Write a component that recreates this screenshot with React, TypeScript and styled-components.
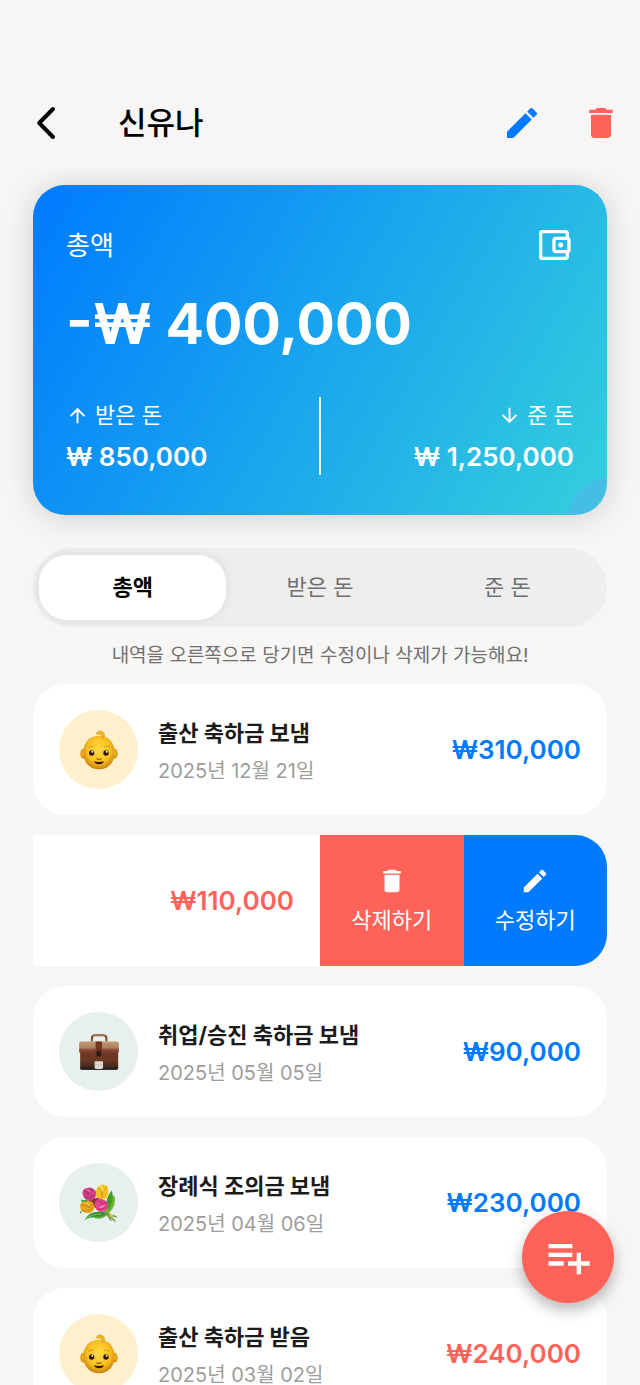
import React, { useState } from "react";
import styled, { createGlobalStyle } from "styled-components";
import {
  MdArrowDownward,
  MdArrowUpward,
  MdDelete,
  MdEdit,
  MdOutlineAccountBalanceWallet,
  MdPlaylistAdd,
} from "react-icons/md";

const color = {
  page: "#f7f6f4",
  blue: "#007aff",
  red: "#ff6259",
  ink: "#1c1b1b",
  muted: "#707070",
  faint: "#9d9d9d",
  cream: "#fff0cd",
  mint: "#e7f0ef",
};

const GlobalStyle = createGlobalStyle`
  *, *::before, *::after { box-sizing: border-box; }
  body {
    margin: 0;
    background: ${color.page};
    color: ${color.ink};
    font-family: Inter, "Noto Sans CJK KR", sans-serif;
  }
  h1, h2, p, ul { margin: 0; padding: 0; }
  ul { list-style: none; }
  button {
    margin: 0;
    padding: 0;
    border: 0;
    background: none;
    color: inherit;
    font: inherit;
    cursor: pointer;
  }
  svg { display: block; }
`;

const Screen = styled.div`
  display: flex;
  flex-direction: column;
  height: 100vh;
`;

const Header = styled.header`
  display: flex;
  align-items: center;
  flex: none;
  padding: 100px 19px 23px 26px;
`;

const BackButton = styled.button`
  display: grid;
  place-items: center;
  width: 40px;
  height: 46px;
`;

const Name = styled.h1`
  flex: 1;
  margin-left: 52px;
  color: #000;
  font-size: 31px;
  font-weight: 500;
  line-height: 46px;
`;

const HeaderActions = styled.div`
  display: flex;
  gap: 39px;
`;

const IconButton = styled.button<{ $tint: string }>`
  display: grid;
  place-items: center;
  height: 46px;
  color: ${(p) => p.$tint};
`;

const Content = styled.main`
  flex: 1;
  min-height: 0;
  padding: 16px 33px 0;
  overflow-y: auto;
  scrollbar-width: none;
`;

const Summary = styled.section`
  position: relative;
  display: flex;
  flex-direction: column;
  padding: 40px 33px;
  border-radius: 32px;
  background:
    radial-gradient(circle at calc(100% + 4px) calc(100% + 5px), #43bfe6 43px, transparent 44px),
    linear-gradient(120deg, #007aff 0%, #34d0dc 100%);
  box-shadow: 0 2px 30px rgba(0, 0, 0, 0.16);
  color: #fff;
`;

const SummaryTop = styled.div`
  display: flex;
  align-items: center;
  justify-content: space-between;
  height: 40px;
`;

const SummaryLabel = styled.h2`
  padding-top: 2px;
  font-size: 26px;
  font-weight: 400;
  line-height: 40px;
`;

const Total = styled.p`
  margin-top: 24px;
  font-size: 57px;
  font-weight: 700;
  line-height: 70px;
`;

const Stats = styled.div`
  display: flex;
  justify-content: space-between;
  margin-top: 38px;
`;

const Divider = styled.div`
  width: 2px;
  background: rgba(255, 255, 255, 0.9);
`;

const Stat = styled.div<{ $end?: boolean }>`
  display: flex;
  flex: 1;
  flex-direction: column;
  align-items: ${(p) => (p.$end ? "flex-end" : "flex-start")};
  gap: 8px;
  padding: 1px 0;
`;

const StatLabel = styled.p`
  display: flex;
  align-items: center;
  gap: 6px;
  font-size: 22px;
  line-height: 34px;
`;

const StatValue = styled.p`
  font-size: 26px;
  font-weight: 600;
  line-height: 34px;
`;

const Tabs = styled.div`
  display: flex;
  margin-top: 33px;
  padding: 7px 6px;
  border-radius: 39px;
  background: #eeeeee;
`;

const Tab = styled.button<{ $active: boolean }>`
  flex: 1;
  height: 65px;
  padding-bottom: 5px;
  border-radius: 28px;
  background: ${(p) => (p.$active ? "#fff" : "transparent")};
  box-shadow: ${(p) => (p.$active ? "0 0 12px rgba(0, 0, 0, 0.08)" : "none")};
  color: ${(p) => (p.$active ? "#000" : color.muted)};
  font-size: 22px;
  font-weight: ${(p) => (p.$active ? 700 : 400)};
`;

const Hint = styled.p`
  padding: 15px 0 14px;
  color: ${color.muted};
  font-size: 19px;
  line-height: 28px;
  text-align: center;
`;

const List = styled.ul`
  display: flex;
  flex-direction: column;
  gap: 20px;
  padding-bottom: 20px;
`;

const Row = styled.li`
  display: flex;
  align-items: center;
  min-height: 131px;
  padding: 26px;
  border-radius: 32px;
  background: #fff;
`;

const Avatar = styled.span<{ $fill: string }>`
  display: grid;
  place-items: center;
  width: 79px;
  height: 79px;
  border-radius: 50%;
  background: ${(p) => p.$fill};
`;

const RowText = styled.div`
  display: flex;
  flex: 1;
  flex-direction: column;
  gap: 2px;
  margin-left: 20px;
  padding-top: 4px;
`;

const RowTitle = styled.p`
  font-size: 22px;
  font-weight: 700;
  line-height: 36px;
`;

const RowDate = styled.p`
  color: ${color.faint};
  font-size: 20px;
  line-height: 36px;
`;

const Amount = styled.span<{ $tint: string }>`
  color: ${(p) => p.$tint};
  font-size: 26px;
  font-weight: 600;
  line-height: 34px;
`;

const SwipedRow = styled.li`
  display: grid;
  grid-template-columns: 2fr 1fr 1fr;
  min-height: 131px;
  border-radius: 0 32px 32px 0;
  overflow: hidden;
`;

const SwipedFace = styled.div`
  display: flex;
  align-items: center;
  justify-content: flex-end;
  padding-right: 26px;
  background: #fff;
`;

const SwipeAction = styled.button<{ $fill: string }>`
  display: flex;
  flex-direction: column;
  align-items: center;
  justify-content: center;
  gap: 8px;
  background: ${(p) => p.$fill};
  color: #fff;
  font-size: 22px;
  line-height: 32px;
`;

const AddButton = styled.button`
  position: fixed;
  right: 26px;
  bottom: 82px;
  display: grid;
  place-items: center;
  width: 92px;
  height: 92px;
  border-radius: 50%;
  background: ${color.red};
  box-shadow: 0 8px 14px rgba(0, 0, 0, 0.22), 0 2px 20px rgba(0, 0, 0, 0.08);
  color: #fff;
`;

const BackIcon = () => (
  <svg width="20" height="34" viewBox="0 0 20 34" fill="none" aria-hidden="true">
    <path d="M17 3 3.2 17 17 31" stroke="#000" strokeWidth="4" strokeLinecap="round" strokeLinejoin="round" />
  </svg>
);

const BabyIcon = () => (
  <svg width="38" height="40" viewBox="0 0 114 120" aria-hidden="true">
    <defs>
      <radialGradient id="skin" cx="50%" cy="42%" r="58%">
        <stop offset="0" stopColor="#ffda45" />
        <stop offset="0.65" stopColor="#f9c020" />
        <stop offset="1" stopColor="#c87f0d" />
      </radialGradient>
    </defs>
    <ellipse cx="10" cy="71" rx="9" ry="15" fill="#dc9a16" />
    <ellipse cx="104" cy="71" rx="9" ry="15" fill="#dc9a16" />
    <ellipse cx="11" cy="69" rx="5" ry="9" fill="#f3b51d" />
    <ellipse cx="103" cy="69" rx="5" ry="9" fill="#f3b51d" />
    <path d="M57 17C84 17 104 37 104 66c0 31-19 52-47 52S10 97 10 66C10 37 30 17 57 17Z" fill="url(#skin)" />
    <path d="M50 8C58-3 76 4 74 20c-1 5-4 6-7 5 1-9-5-14-15-12-3 0-4-3-2-5Z" fill="#efb51b" stroke="#bf7c0f" strokeWidth="1" />
    <path d="M25 52q7-6 15-3M74 49q8-3 15 3" fill="none" stroke="#d79a1c" strokeWidth="3" strokeLinecap="round" />
    <circle cx="35" cy="69" r="8" fill="#2e1507" />
    <circle cx="78" cy="69" r="8" fill="#2e1507" />
    <circle cx="37" cy="65" r="3" fill="#fff" />
    <circle cx="80" cy="65" r="3" fill="#fff" />
    <path d="M51 86q6 5 12 0" fill="none" stroke="#a85d08" strokeWidth="4" strokeLinecap="round" />
    <path d="M42 94q15 4 30 0-3 9-15 9t-15-9Z" fill="#34150a" />
  </svg>
);

const BriefcaseIcon = () => (
  <svg width="40" height="36" viewBox="0 0 118 107" aria-hidden="true">
    <defs>
      <linearGradient id="leather" x1="0" y1="0" x2="0" y2="1">
        <stop offset="0" stopColor="#6f3524" />
        <stop offset="0.6" stopColor="#6b3823" />
        <stop offset="1" stopColor="#38241c" />
      </linearGradient>
      <linearGradient id="flap" x1="0" y1="0" x2="0" y2="1">
        <stop offset="0" stopColor="#c09a74" />
        <stop offset="0.5" stopColor="#ad815c" />
        <stop offset="0.65" stopColor="#8a4a3a" />
        <stop offset="1" stopColor="#6d3427" />
      </linearGradient>
    </defs>
    <path d="M38 22V13q0-9 9-9h25q9 0 9 9v9" fill="none" stroke="#7b4a35" strokeWidth="6" />
    <path d="M41 7q3-4 8-4h22q5 0 7 4" fill="none" stroke="#a87a5a" strokeWidth="4" />
    <path d="M3 30h113v70q0 6-6 6H8q-5 0-5-6Z" fill="url(#leather)" />
    <path d="M5 22h108q5 0 5 6v26q-8 6-20 6H19Q7 60 0 54V28q0-6 5-6Z" fill="url(#flap)" />
    <path d="M3 98h113v2q0 6-6 6H8q-5 0-5-6Z" fill="#2b211d" />
    <path d="M49 22h19v45q0 5-5 5h-9q-5 0-5-5Z" fill="#70351f" />
    <path d="M52 50h13v13q0 4-4 4h-5q-4 0-4-4Z" fill="#2c1c17" />
    <path d="M46 81h25v18q0 5-5 5H51q-5 0-5-5Z" fill="#dedbd7" />
    <path d="M48 91h21v2H48Z" fill="#b8b3ae" />
  </svg>
);

const BouquetIcon = () => (
  <svg width="38" height="38" viewBox="0 0 116 116" aria-hidden="true">
    <path d="M105 35q8 30-17 54L76 78q6-31 29-43Z" fill="#69b52c" />
    <path d="M97 20q10 28-9 56l-9-6q0-30 18-50Z" fill="#3f9c2c" />
    <path d="M14 109q16-28 52-24 9 1 18 4-14 16-34 13-16-2-36 7Z" fill="#2f8f3a" />
    <path d="M16 108q21-17 50-16" fill="none" stroke="#8ccb4b" strokeWidth="3" />
    <path d="M45 101q20 6 40-12" fill="none" stroke="#55a930" strokeWidth="6" />
    <path d="m75 82 18 13 17 5M82 87l24 26M80 88l14 22" fill="none" stroke="#7a9f3c" strokeWidth="5" strokeLinecap="round" />
    <path d="m91 93 8 6" stroke="#f0cb31" strokeWidth="6" />
    <path d="M26 48q20-10 36 2l-10 24-26-8Z" fill="#8a3a3a" />
    <path d="M9 20q4-8 13-8 10-4 18 3 11 4 9 16-1 16-17 20-18-1-22-14-5-9-1-17Z" fill="#cf3f86" />
    <path d="M12 21q11 0 14 12 2-15 14-17M16 40q12 5 26-5" fill="none" stroke="#a02a66" strokeWidth="3" />
    <path d="M22 17q7 3 9 9" stroke="#e773a4" strokeWidth="4" fill="none" />
    <path d="M53 9q7 0 10-6 7-4 12 1 6-1 10 7 6 23-7 34-12 8-24 0-11-12-1-36Z" fill="#f5c022" />
    <path d="M55 12q13 8 13 30Q67 20 81 11" fill="none" stroke="#d6941a" strokeWidth="3" />
    <path d="M64 8q6 6 6 14" fill="none" stroke="#ffe067" strokeWidth="5" />
    <path d="M3 58q12-12 27-5 15 4 14 20-2 14-18 16Q4 88 2 77q-3-11 1-19Z" fill="#e6a81e" />
    <path d="M3 65q16-4 25 8 3-11 14-10M7 81q16 6 29-5" fill="none" stroke="#bd7d16" strokeWidth="3" />
    <path d="M12 59q12-2 17 6" fill="none" stroke="#f6c83d" strokeWidth="4" />
    <path d="M52 47q10-7 20 2 12 2 13 15 0 17-15 21-15 3-22-10-7-16 4-28Z" fill="#e2468f" />
    <path d="M54 51q13 0 13 13 4-10 15-5M52 75q14 7 28-6" fill="none" stroke="#b92d70" strokeWidth="3" />
    <path d="M60 70q9 2 15-5" fill="none" stroke="#f589b5" strokeWidth="5" />
    <path d="M46 48q6-5 10-2" stroke="#a02a60" strokeWidth="5" fill="none" />
    <path d="M4 50q10 4 19-1M3 84l-2 5" fill="none" stroke="#3e9a35" strokeWidth="5" />
  </svg>
);

type Entry = {
  title: string;
  date: string;
  amount: string;
  received?: boolean;
  icon: React.ReactNode;
  fill: string;
  swiped?: boolean;
};

const entries: Entry[] = [
  { title: "출산 축하금 보냄", date: "2025년 12월 21일", amount: "₩310,000", icon: <BabyIcon />, fill: color.cream },
  { title: "", date: "", amount: "₩110,000", received: true, icon: null, fill: color.cream, swiped: true },
  { title: "취업/승진 축하금 보냄", date: "2025년 05월 05일", amount: "₩90,000", icon: <BriefcaseIcon />, fill: color.mint },
  { title: "장례식 조의금 보냄", date: "2025년 04월 06일", amount: "₩230,000", icon: <BouquetIcon />, fill: color.mint },
  { title: "출산 축하금 받음", date: "2025년 03월 02일", amount: "₩240,000", received: true, icon: <BabyIcon />, fill: color.cream },
];

const tabs = ["총액", "받은 돈", "준 돈"];

const EntryRow = ({ entry }: { entry: Entry }) => {
  const tint = entry.received ? color.red : color.blue;
  if (entry.swiped) {
    return (
      <SwipedRow>
        <SwipedFace>
          <Amount $tint={tint}>{entry.amount}</Amount>
        </SwipedFace>
        <SwipeAction type="button" $fill={color.red}>
          <MdDelete size={30} />
          삭제하기
        </SwipeAction>
        <SwipeAction type="button" $fill={color.blue}>
          <MdEdit size={30} />
          수정하기
        </SwipeAction>
      </SwipedRow>
    );
  }
  return (
    <Row>
      <Avatar $fill={entry.fill}>{entry.icon}</Avatar>
      <RowText>
        <RowTitle>{entry.title}</RowTitle>
        <RowDate>{entry.date}</RowDate>
      </RowText>
      <Amount $tint={tint}>{entry.amount}</Amount>
    </Row>
  );
};

export default function App() {
  const [active, setActive] = useState(0);

  return (
    <Screen lang="ko">
      <GlobalStyle />
      <Header>
        <BackButton type="button" aria-label="뒤로">
          <BackIcon />
        </BackButton>
        <Name>신유나</Name>
        <HeaderActions>
          <IconButton type="button" $tint={color.blue} aria-label="수정">
            <MdEdit size={40} />
          </IconButton>
          <IconButton type="button" $tint={color.red} aria-label="삭제">
            <MdDelete size={40} />
          </IconButton>
        </HeaderActions>
      </Header>

      <Content>
        <Summary>
          <SummaryTop>
            <SummaryLabel>총액</SummaryLabel>
            <MdOutlineAccountBalanceWallet size={40} />
          </SummaryTop>
          <Total>-₩ 400,000</Total>
          <Stats>
            <Stat>
              <StatLabel>
                <MdArrowUpward size={23} />
                받은 돈
              </StatLabel>
              <StatValue>₩ 850,000</StatValue>
            </Stat>
            <Divider />
            <Stat $end>
              <StatLabel>
                <MdArrowDownward size={23} />
                준 돈
              </StatLabel>
              <StatValue>₩ 1,250,000</StatValue>
            </Stat>
          </Stats>
        </Summary>

        <Tabs role="tablist">
          {tabs.map((label, i) => (
            <Tab
              key={label}
              type="button"
              role="tab"
              aria-selected={i === active}
              $active={i === active}
              onClick={() => setActive(i)}
            >
              {label}
            </Tab>
          ))}
        </Tabs>

        <Hint>내역을 오른쪽으로 당기면 수정이나 삭제가 가능해요!</Hint>

        <List>
          {entries.map((entry) => (
            <EntryRow key={entry.date + entry.amount} entry={entry} />
          ))}
        </List>
      </Content>

      <AddButton type="button" aria-label="내역 추가">
        <MdPlaylistAdd size={52} />
      </AddButton>
    </Screen>
  );
}
